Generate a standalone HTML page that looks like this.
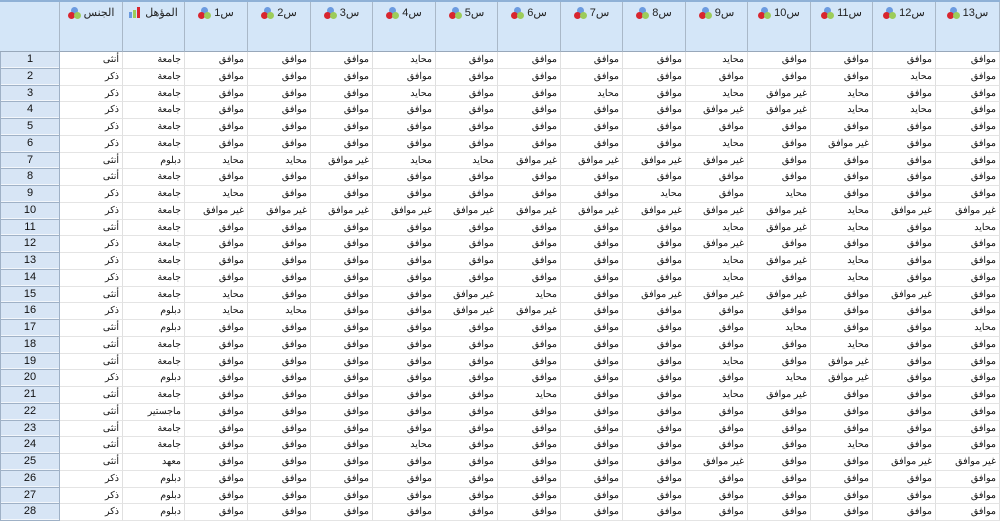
<!DOCTYPE html>
<html><head><meta charset="utf-8"><style>
*{margin:0;padding:0;box-sizing:border-box}
body{width:1000px;height:509px;overflow:hidden;background:#fff;font-family:"Liberation Sans","Noto Sans CJK SC",sans-serif}
.top{position:absolute;left:0;top:0;width:1000px;height:2px;background:#8fb1d6}
table{position:absolute;left:0;top:2px;display:block;width:1000px}
tbody{display:block}
tr{display:flex;height:16.75px}
tr:first-child{height:50px}
td,th{display:block;flex:none;width:62px}
td:nth-child(2),th:nth-child(2),td:nth-child(4),th:nth-child(4),td:nth-child(5),th:nth-child(5),td:nth-child(7),th:nth-child(7),td:nth-child(9),th:nth-child(9),td:nth-child(11),th:nth-child(11),td:nth-child(13),th:nth-child(13),td:nth-child(15),th:nth-child(15){width:63px}
td:nth-child(1),th:nth-child(1){width:60px}
td:nth-child(16),th:nth-child(16){width:64px}
th{height:50px;background:#d4e6f8;border-right:1px solid #a9b8c8;border-bottom:1px solid #98a8ba;font-weight:normal;font-size:11px;color:#222;padding-top:4px;white-space:nowrap;text-align:center}
td{height:16.75px;border-right:1px solid #e0e0e0;border-bottom:1px solid #e4e4e4;text-align:right;font-size:9.5px;color:#111;padding-right:3px;white-space:nowrap;overflow:hidden;line-height:15px}
td.n{background:#d7e5f5;text-align:center;font-size:11px;padding:0;border:1px solid #9fb1c6;border-top:none;color:#111;line-height:14px;box-shadow:inset 0 -1px 0 #f2f6fb}
.ic{display:inline-block;position:relative;width:13px;height:12px;vertical-align:-3px;margin-right:3px}
.ic i{position:absolute;width:7px;height:7px;border-radius:50%}
.ic .b{left:3px;top:0;background:#6c9be0}
.ic .r{left:0;top:5px;background:#d8262f}
.ic .g{left:6px;top:5px;background:#9ccc5a}
.bar{display:inline-block;width:13px;height:11px;vertical-align:-2px;margin-right:3px;position:relative}
.bar i{position:absolute;bottom:0;width:3px}
</style></head><body>
<div class="top"></div>
<table><tbody>
<tr><th></th>
<th><span class="ic"><i class="b"></i><i class="r"></i><i class="g"></i></span>الجنس</th>
<th><span class="bar"><i style="left:0;height:6px;background:#6c9be0"></i><i style="left:4px;height:8px;background:#9ccc5a"></i><i style="left:8px;height:11px;background:#d8262f"></i></span>المؤهل</th>
<th><span class="ic"><i class="b"></i><i class="r"></i><i class="g"></i></span>س1</th>
<th><span class="ic"><i class="b"></i><i class="r"></i><i class="g"></i></span>س2</th>
<th><span class="ic"><i class="b"></i><i class="r"></i><i class="g"></i></span>س3</th>
<th><span class="ic"><i class="b"></i><i class="r"></i><i class="g"></i></span>س4</th>
<th><span class="ic"><i class="b"></i><i class="r"></i><i class="g"></i></span>س5</th>
<th><span class="ic"><i class="b"></i><i class="r"></i><i class="g"></i></span>س6</th>
<th><span class="ic"><i class="b"></i><i class="r"></i><i class="g"></i></span>س7</th>
<th><span class="ic"><i class="b"></i><i class="r"></i><i class="g"></i></span>س8</th>
<th><span class="ic"><i class="b"></i><i class="r"></i><i class="g"></i></span>س9</th>
<th><span class="ic"><i class="b"></i><i class="r"></i><i class="g"></i></span>س10</th>
<th><span class="ic"><i class="b"></i><i class="r"></i><i class="g"></i></span>س11</th>
<th><span class="ic"><i class="b"></i><i class="r"></i><i class="g"></i></span>س12</th>
<th><span class="ic"><i class="b"></i><i class="r"></i><i class="g"></i></span>س13</th></tr>
<tr><td class="n">1</td><td>أنثى</td><td>جامعة</td><td>موافق</td><td>موافق</td><td>موافق</td><td>محايد</td><td>موافق</td><td>موافق</td><td>موافق</td><td>موافق</td><td>محايد</td><td>موافق</td><td>موافق</td><td>موافق</td><td>موافق</td></tr>
<tr><td class="n">2</td><td>ذكر</td><td>جامعة</td><td>موافق</td><td>موافق</td><td>موافق</td><td>موافق</td><td>موافق</td><td>موافق</td><td>موافق</td><td>موافق</td><td>موافق</td><td>موافق</td><td>موافق</td><td>محايد</td><td>موافق</td></tr>
<tr><td class="n">3</td><td>ذكر</td><td>جامعة</td><td>موافق</td><td>موافق</td><td>موافق</td><td>محايد</td><td>موافق</td><td>موافق</td><td>محايد</td><td>موافق</td><td>محايد</td><td>غير موافق</td><td>محايد</td><td>موافق</td><td>موافق</td></tr>
<tr><td class="n">4</td><td>ذكر</td><td>جامعة</td><td>موافق</td><td>موافق</td><td>موافق</td><td>موافق</td><td>موافق</td><td>موافق</td><td>موافق</td><td>موافق</td><td>غير موافق</td><td>غير موافق</td><td>محايد</td><td>محايد</td><td>موافق</td></tr>
<tr><td class="n">5</td><td>ذكر</td><td>جامعة</td><td>موافق</td><td>موافق</td><td>موافق</td><td>موافق</td><td>موافق</td><td>موافق</td><td>موافق</td><td>موافق</td><td>موافق</td><td>موافق</td><td>موافق</td><td>موافق</td><td>موافق</td></tr>
<tr><td class="n">6</td><td>ذكر</td><td>جامعة</td><td>موافق</td><td>موافق</td><td>موافق</td><td>موافق</td><td>موافق</td><td>موافق</td><td>موافق</td><td>موافق</td><td>محايد</td><td>موافق</td><td>غير موافق</td><td>موافق</td><td>موافق</td></tr>
<tr><td class="n">7</td><td>أنثى</td><td>دبلوم</td><td>محايد</td><td>محايد</td><td>غير موافق</td><td>محايد</td><td>محايد</td><td>غير موافق</td><td>غير موافق</td><td>غير موافق</td><td>غير موافق</td><td>موافق</td><td>موافق</td><td>موافق</td><td>موافق</td></tr>
<tr><td class="n">8</td><td>أنثى</td><td>جامعة</td><td>موافق</td><td>موافق</td><td>موافق</td><td>موافق</td><td>موافق</td><td>موافق</td><td>موافق</td><td>موافق</td><td>موافق</td><td>موافق</td><td>موافق</td><td>موافق</td><td>موافق</td></tr>
<tr><td class="n">9</td><td>ذكر</td><td>جامعة</td><td>محايد</td><td>موافق</td><td>موافق</td><td>موافق</td><td>موافق</td><td>موافق</td><td>موافق</td><td>محايد</td><td>موافق</td><td>محايد</td><td>موافق</td><td>موافق</td><td>موافق</td></tr>
<tr><td class="n">10</td><td>ذكر</td><td>جامعة</td><td>غير موافق</td><td>غير موافق</td><td>غير موافق</td><td>غير موافق</td><td>غير موافق</td><td>غير موافق</td><td>غير موافق</td><td>غير موافق</td><td>غير موافق</td><td>غير موافق</td><td>محايد</td><td>غير موافق</td><td>غير موافق</td></tr>
<tr><td class="n">11</td><td>أنثى</td><td>جامعة</td><td>موافق</td><td>موافق</td><td>موافق</td><td>موافق</td><td>موافق</td><td>موافق</td><td>موافق</td><td>موافق</td><td>محايد</td><td>غير موافق</td><td>محايد</td><td>موافق</td><td>محايد</td></tr>
<tr><td class="n">12</td><td>ذكر</td><td>جامعة</td><td>موافق</td><td>موافق</td><td>موافق</td><td>موافق</td><td>موافق</td><td>موافق</td><td>موافق</td><td>موافق</td><td>غير موافق</td><td>موافق</td><td>موافق</td><td>موافق</td><td>موافق</td></tr>
<tr><td class="n">13</td><td>ذكر</td><td>جامعة</td><td>موافق</td><td>موافق</td><td>موافق</td><td>موافق</td><td>موافق</td><td>موافق</td><td>موافق</td><td>موافق</td><td>محايد</td><td>غير موافق</td><td>محايد</td><td>موافق</td><td>موافق</td></tr>
<tr><td class="n">14</td><td>ذكر</td><td>جامعة</td><td>موافق</td><td>موافق</td><td>موافق</td><td>موافق</td><td>موافق</td><td>موافق</td><td>موافق</td><td>موافق</td><td>محايد</td><td>موافق</td><td>محايد</td><td>موافق</td><td>موافق</td></tr>
<tr><td class="n">15</td><td>أنثى</td><td>جامعة</td><td>محايد</td><td>موافق</td><td>موافق</td><td>موافق</td><td>غير موافق</td><td>محايد</td><td>موافق</td><td>غير موافق</td><td>غير موافق</td><td>غير موافق</td><td>موافق</td><td>غير موافق</td><td>موافق</td></tr>
<tr><td class="n">16</td><td>ذكر</td><td>دبلوم</td><td>محايد</td><td>محايد</td><td>موافق</td><td>موافق</td><td>غير موافق</td><td>غير موافق</td><td>موافق</td><td>موافق</td><td>موافق</td><td>موافق</td><td>موافق</td><td>موافق</td><td>موافق</td></tr>
<tr><td class="n">17</td><td>أنثى</td><td>دبلوم</td><td>موافق</td><td>موافق</td><td>موافق</td><td>موافق</td><td>موافق</td><td>موافق</td><td>موافق</td><td>موافق</td><td>موافق</td><td>محايد</td><td>موافق</td><td>موافق</td><td>محايد</td></tr>
<tr><td class="n">18</td><td>أنثى</td><td>جامعة</td><td>موافق</td><td>موافق</td><td>موافق</td><td>موافق</td><td>موافق</td><td>موافق</td><td>موافق</td><td>موافق</td><td>موافق</td><td>موافق</td><td>محايد</td><td>موافق</td><td>موافق</td></tr>
<tr><td class="n">19</td><td>أنثى</td><td>جامعة</td><td>موافق</td><td>موافق</td><td>موافق</td><td>موافق</td><td>موافق</td><td>موافق</td><td>موافق</td><td>موافق</td><td>محايد</td><td>موافق</td><td>غير موافق</td><td>موافق</td><td>موافق</td></tr>
<tr><td class="n">20</td><td>ذكر</td><td>دبلوم</td><td>موافق</td><td>موافق</td><td>موافق</td><td>موافق</td><td>موافق</td><td>موافق</td><td>موافق</td><td>موافق</td><td>موافق</td><td>محايد</td><td>غير موافق</td><td>موافق</td><td>موافق</td></tr>
<tr><td class="n">21</td><td>أنثى</td><td>جامعة</td><td>موافق</td><td>موافق</td><td>موافق</td><td>موافق</td><td>موافق</td><td>محايد</td><td>موافق</td><td>موافق</td><td>محايد</td><td>غير موافق</td><td>موافق</td><td>موافق</td><td>موافق</td></tr>
<tr><td class="n">22</td><td>أنثى</td><td>ماجستير</td><td>موافق</td><td>موافق</td><td>موافق</td><td>موافق</td><td>موافق</td><td>موافق</td><td>موافق</td><td>موافق</td><td>موافق</td><td>موافق</td><td>موافق</td><td>موافق</td><td>موافق</td></tr>
<tr><td class="n">23</td><td>أنثى</td><td>جامعة</td><td>موافق</td><td>موافق</td><td>موافق</td><td>موافق</td><td>موافق</td><td>موافق</td><td>موافق</td><td>موافق</td><td>موافق</td><td>موافق</td><td>موافق</td><td>موافق</td><td>موافق</td></tr>
<tr><td class="n">24</td><td>أنثى</td><td>جامعة</td><td>موافق</td><td>موافق</td><td>موافق</td><td>محايد</td><td>موافق</td><td>موافق</td><td>موافق</td><td>موافق</td><td>موافق</td><td>موافق</td><td>محايد</td><td>موافق</td><td>موافق</td></tr>
<tr><td class="n">25</td><td>أنثى</td><td>معهد</td><td>موافق</td><td>موافق</td><td>موافق</td><td>موافق</td><td>موافق</td><td>موافق</td><td>موافق</td><td>موافق</td><td>غير موافق</td><td>موافق</td><td>موافق</td><td>غير موافق</td><td>غير موافق</td></tr>
<tr><td class="n">26</td><td>ذكر</td><td>دبلوم</td><td>موافق</td><td>موافق</td><td>موافق</td><td>موافق</td><td>موافق</td><td>موافق</td><td>موافق</td><td>موافق</td><td>موافق</td><td>موافق</td><td>موافق</td><td>موافق</td><td>موافق</td></tr>
<tr><td class="n">27</td><td>ذكر</td><td>دبلوم</td><td>موافق</td><td>موافق</td><td>موافق</td><td>موافق</td><td>موافق</td><td>موافق</td><td>موافق</td><td>موافق</td><td>موافق</td><td>موافق</td><td>موافق</td><td>موافق</td><td>موافق</td></tr>
<tr><td class="n">28</td><td>ذكر</td><td>دبلوم</td><td>موافق</td><td>موافق</td><td>موافق</td><td>موافق</td><td>موافق</td><td>موافق</td><td>موافق</td><td>موافق</td><td>موافق</td><td>موافق</td><td>موافق</td><td>موافق</td><td>موافق</td></tr>
</tbody></table>
</body></html>
